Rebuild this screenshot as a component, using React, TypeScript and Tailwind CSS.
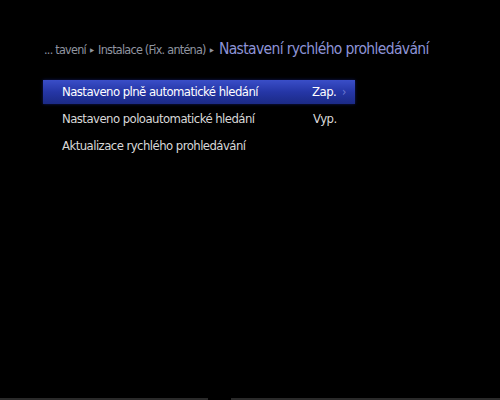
import React from "react";

export default function App() {
  const font = { fontFamily: '"Liberation Sans Narrow", "DejaVu Sans Condensed", "Liberation Sans", sans-serif' };
  return (
    <div className="w-[500px] h-[400px] bg-black relative overflow-hidden flex flex-col" style={font}>
      <div className="flex items-baseline pl-[44px] pt-[38px] h-[62px] whitespace-nowrap">
        <span className="text-[12.5px] tracking-[-0.75px] text-[#9095a0]">... tavení</span>
        <span className="text-[6px] text-[#9095a0] mx-[4px] -translate-y-[2px]">▶</span>
        <span className="text-[12.5px] tracking-[-0.75px] text-[#9095a0]">Instalace (Fix. anténa)</span>
        <span className="text-[6px] text-[#9095a0] ml-[4px] mr-[5px] -translate-y-[2px]">▶</span>
        <span className="text-[15.5px] tracking-[-0.65px] text-[#8d93d6]">Nastavení rychlého prohledávání</span>
      </div>
      <div className="flex flex-col pl-[43px] w-[355px] mt-[18px]">
        <div className="h-[24px] flex items-center pl-[19px] bg-gradient-to-b from-[#3a4ec8] via-[#2536a6] to-[#1b2a86] shadow-[0_0_3px_#101a60]">
          <span className="text-[13px] tracking-[-0.55px] text-white w-[250px]">Nastaveno plně automatické hledání</span>
          <span className="text-[13px] tracking-[-0.5px] text-white w-[30px]">Zap.</span>
          <span className="text-[12px] text-[#6d7ad0]">›</span>
        </div>
        <div className="h-[28px] flex items-center pl-[19px] mt-[1px]">
          <span className="text-[13px] tracking-[-0.55px] text-[#d8d8d8] w-[251px]">Nastaveno poloautomatické hledání</span>
          <span className="text-[13px] tracking-[-0.5px] text-[#d8d8d8]">Vyp.</span>
        </div>
        <div className="h-[26px] flex items-center pl-[19px]">
          <span className="text-[13px] tracking-[-0.55px] text-[#d8d8d8]">Aktualizace rychlého prohledávání</span>
        </div>
      </div>
      <div className="absolute left-0 right-0 bottom-0 h-[2px] flex">
        <div className="w-[208px] bg-[#2a2a2a]" />
        <div className="w-[23px] bg-black" />
        <div className="flex-1 bg-[#2a2a2a]" />
      </div>
    </div>
  );
}
